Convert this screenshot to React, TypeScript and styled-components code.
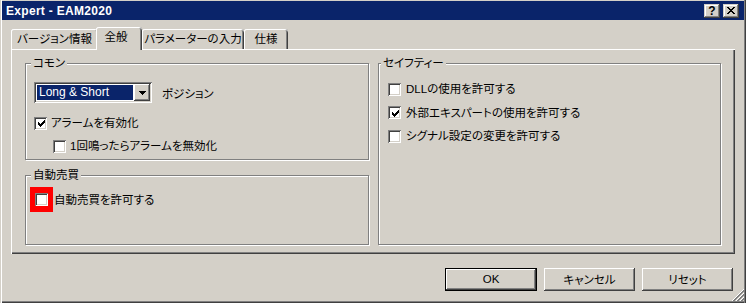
import React from "react";
import styled, { createGlobalStyle } from "styled-components";

const UI_FONT = `"Liberation Sans", "Noto Sans CJK JP", sans-serif`;

const GlobalStyle = createGlobalStyle`
  * { box-sizing: border-box; }
  html, body { margin: 0; padding: 0; background: #d4d0c8; }
  body {
    font-family: ${UI_FONT};
    font-size: 11.5px;
    color: #000;
    font-feature-settings: "palt";
  }
`;

const RAISED = `inset -1px -1px #404040, inset 1px 1px #fff, inset -2px -2px #808080, inset 2px 2px #d4d0c8`;
const SUNKEN = `inset 1px 1px #808080, inset -1px -1px #fff, inset 2px 2px #404040, inset -2px -2px #d4d0c8`;

const Window = styled.div`
  position: relative;
  width: 746px;
  height: 303px;
  display: flex;
  flex-direction: column;
  padding: 1px 2px 2px 2px;
  background: #d4d0c8;
  box-shadow: inset 1px 0 #d4d0c8, inset 2px 0 #fff, inset -1px 0 #404040,
    inset -2px 0 #808080, inset 0 -1px #404040, inset 0 -2px #808080;
`;

const TitleBar = styled.div`
  flex: none;
  height: 19px;
  display: flex;
  align-items: center;
  padding: 0 5px 0 4px;
  background: #0a246a;
`;

const TitleText = styled.span`
  flex: 1;
  font: bold 12px "Liberation Sans", sans-serif;
  letter-spacing: 0.3px;
  color: #fff;
  white-space: nowrap;
`;

const CaptionButtons = styled.div`
  display: flex;
  gap: 3px;
`;

const CaptionButton = styled.div`
  width: 16px;
  height: 14px;
  display: flex;
  align-items: center;
  justify-content: center;
  background: #d4d0c8;
  box-shadow: inset -1px -1px #404040, inset 1px 1px #d4d0c8, inset -2px -2px #808080, inset 2px 2px #fff;
  font: bold 12px "Liberation Sans", sans-serif;
  line-height: 12px;
  color: #000;
`;

const Body = styled.div`
  flex: 1;
  display: flex;
  flex-direction: column;
  padding: 7px 9px 0 9px;
`;

const TabStrip = styled.div`
  position: relative;
  z-index: 1;
  height: 22px;
  display: flex;
  align-items: flex-end;
`;

const Tab = styled.div<{ $w: number; $active?: boolean }>`
  position: relative;
  z-index: ${(p) => (p.$active ? 2 : 1)};
  width: ${(p) => p.$w}px;
  height: ${(p) => (p.$active ? 23 : 20)}px;
  margin: ${(p) => (p.$active ? "0 0 -1px -2px" : "0")};
  padding: ${(p) => (p.$active ? "0 6px 3px 0" : "0 0 1px 0")};
  display: flex;
  align-items: center;
  justify-content: center;
  background: #d4d0c8;
  border-radius: 3px 3px 0 0;
  box-shadow: inset 1px 0 #fff, inset 0 1px #fff, inset -1px 0 #404040, inset -2px 0 #808080;
  line-height: 14px;
  white-space: nowrap;
`;

const Panel = styled.div`
  flex: none;
  height: 205px;
  display: grid;
  grid-template-columns: 345px 344px;
  column-gap: 8px;
  padding: 14px 13px 9px 14px;
  background: #d4d0c8;
  box-shadow: inset 1px 1px #fff, inset -1px -1px #404040, inset -2px -2px #808080;
`;

const Column = styled.div`
  display: flex;
  flex-direction: column;
  gap: 15px;
`;

const Group = styled.div<{ $h?: number; $pad: string; $gap?: number }>`
  position: relative;
  height: ${(p) => (p.$h ? `${p.$h}px` : "auto")};
  margin-right: 1px;
  padding: ${(p) => p.$pad};
  display: flex;
  flex-direction: column;
  align-items: flex-start;
  gap: ${(p) => p.$gap ?? 0}px;
  border: 1px solid #808080;
  box-shadow: inset 1px 1px #fff, 1px 1px #fff;
`;

const GroupLabel = styled.span<{ $x: number }>`
  position: absolute;
  top: -8px;
  left: ${(p) => p.$x}px;
  padding: 0 2px;
  background: #d4d0c8;
  line-height: 14px;
  white-space: nowrap;
`;

const ComboRow = styled.div`
  display: flex;
  align-items: center;
  gap: 10px;
  height: 21px;
  white-space: nowrap;
`;

const Combo = styled.div`
  width: 118px;
  height: 21px;
  display: flex;
  padding: 2px;
  background: #fff;
  box-shadow: ${SUNKEN};
`;

const ComboField = styled.div`
  flex: 1;
  display: flex;
  padding: 1px;
`;

const ComboValue = styled.span`
  flex: 1;
  padding-left: 2px;
  background: #0a246a;
  color: #fff;
  font: 12px "Liberation Sans", sans-serif;
  line-height: 15px;
  white-space: nowrap;
`;

const ComboButton = styled.span`
  width: 16px;
  height: 17px;
  display: flex;
  align-items: center;
  justify-content: center;
  background: #d4d0c8;
  box-shadow: ${RAISED};
`;

const CheckRow = styled.label<{ $indent?: number; $mt?: number; $gap?: number }>`
  display: flex;
  align-items: center;
  gap: ${(p) => p.$gap ?? 4}px;
  height: 16px;
  margin-left: ${(p) => p.$indent ?? 0}px;
  margin-top: ${(p) => p.$mt ?? 0}px;
  line-height: 16px;
  white-space: nowrap;
`;

const Box = styled.span`
  flex: none;
  width: 13px;
  height: 13px;
  display: flex;
  align-items: center;
  justify-content: center;
  padding: 1px 0 0 1px;
  background: #fff;
  box-shadow: ${SUNKEN};
`;

const RedMark = styled.span`
  display: inline-flex;
  border: solid #ff0000;
  border-width: 6px 5px;
`;

const ButtonRow = styled.div`
  display: flex;
  justify-content: flex-end;
  gap: 7px;
  margin-top: 14px;
  padding-right: 2px;
`;

const PushButton = styled.button<{ $w: number; $default?: boolean }>`
  width: ${(p) => p.$w}px;
  height: 23px;
  padding: 0 0 1px 0;
  border: none;
  background: #d4d0c8;
  color: #000;
  font-family: ${UI_FONT};
  font-size: 11.5px;
  font-feature-settings: "palt";
  box-shadow: ${(p) =>
    p.$default
      ? "inset 0 0 0 1px #000, inset -2px -2px #404040, inset 2px 2px #fff, inset -3px -3px #808080"
      : RAISED};
`;

const SizeGrip = styled.svg`
  position: absolute;
  right: 2px;
  bottom: 2px;
`;

const CheckMark = () => (
  <svg width="7" height="7" viewBox="0 0 7 7" shapeRendering="crispEdges">
    <path
      fill="#000"
      d="M0 2h1v3H0zM1 3h1v3H1zM2 4h1v3H2zM3 3h1v3H3zM4 2h1v3H4zM5 1h1v3H5zM6 0h1v3H6z"
    />
  </svg>
);

const Check = ({ checked }: { checked?: boolean }) => <Box>{checked ? <CheckMark /> : null}</Box>;

const CloseGlyph = () => (
  <svg width="8" height="7" viewBox="0 0 8 7" shapeRendering="crispEdges">
    <path
      fill="#000"
      d="M0 0h2v1H0zM6 0h2v1H6zM1 1h2v1H1zM5 1h2v1H5zM2 2h4v1H2zM3 3h2v1H3zM2 4h4v1H2zM1 5h2v1H1zM5 5h2v1H5zM0 6h2v1H0zM6 6h2v1H6z"
    />
  </svg>
);

const DownArrow = () => (
  <svg width="7" height="4" viewBox="0 0 7 4" shapeRendering="crispEdges">
    <path fill="#000" d="M0 0h7v1H0zM1 1h5v1H1zM2 2h3v1H2zM3 3h1v1H3z" />
  </svg>
);

const Grip = () => {
  const rects: React.ReactNode[] = [];
  [11, 15, 19].forEach((base, k) => {
    [
      [base, "#fff"],
      [base + 1, "#808080"],
      [base + 2, "#808080"],
    ].forEach(([c, color]) => {
      const cc = c as number;
      for (let x = Math.max(0, cc - 11); x <= Math.min(11, cc); x++) {
        rects.push(<rect key={`${k}-${cc}-${x}`} x={x} y={cc - x} width={1} height={1} fill={color as string} />);
      }
    });
  });
  return (
    <SizeGrip width="12" height="12" viewBox="0 0 12 12" shapeRendering="crispEdges">
      {rects}
    </SizeGrip>
  );
};

export default function App() {
  return (
    <>
      <GlobalStyle />
      <Window>
        <TitleBar>
          <TitleText>Expert - EAM2020</TitleText>
          <CaptionButtons>
            <CaptionButton>?</CaptionButton>
            <CaptionButton>
              <CloseGlyph />
            </CaptionButton>
          </CaptionButtons>
        </TitleBar>
        <Body>
          <TabStrip>
            <Tab $w={87}>バージョン情報</Tab>
            <Tab $w={46} $active>
              全般
            </Tab>
            <Tab $w={102}>パラメーターの入力</Tab>
            <Tab $w={44}>仕様</Tab>
          </TabStrip>
          <Panel>
            <Column>
              <Group $h={97} $pad="18px 8px 0 8px">
                <GroupLabel $x={5}>コモン</GroupLabel>
                <ComboRow>
                  <Combo>
                    <ComboField>
                      <ComboValue>Long &amp; Short</ComboValue>
                    </ComboField>
                    <ComboButton>
                      <DownArrow />
                    </ComboButton>
                  </Combo>
                  <span>ポジション</span>
                </ComboRow>
                <CheckRow $mt={12}>
                  <Check checked />
                  アラームを有効化
                </CheckRow>
                <CheckRow $mt={7} $indent={19}>
                  <Check />
                  1回鳴ったらアラームを無効化
                </CheckRow>
              </Group>
              <Group $h={70} $pad="11px 4px 0 4px">
                <GroupLabel $x={5}>自動売買</GroupLabel>
                <CheckRow $gap={1} style={{ height: 25 }}>
                  <RedMark>
                    <Check />
                  </RedMark>
                  自動売買を許可する
                </CheckRow>
              </Group>
            </Column>
            <Group $pad="17px 8px 0 9px" $gap={7.5}>
              <GroupLabel $x={2}>セイフティー</GroupLabel>
              <CheckRow $gap={5}>
                <Check />
                DLLの使用を許可する
              </CheckRow>
              <CheckRow $gap={5}>
                <Check checked />
                外部エキスパートの使用を許可する
              </CheckRow>
              <CheckRow $gap={5}>
                <Check />
                シグナル設定の変更を許可する
              </CheckRow>
            </Group>
          </Panel>
          <ButtonRow>
            <PushButton $w={92} $default>
              OK
            </PushButton>
            <PushButton $w={91}>キャンセル</PushButton>
            <PushButton $w={91}>リセット</PushButton>
          </ButtonRow>
        </Body>
        <Grip />
      </Window>
    </>
  );
}
